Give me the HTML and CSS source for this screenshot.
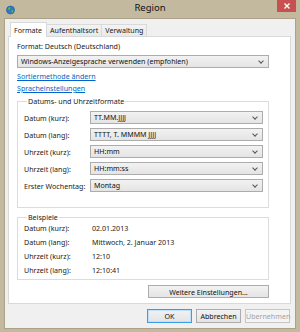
FILE: index.html
```html
<!DOCTYPE html>
<html>
<head>
    <meta charset="utf-8">
    <title>Region</title>
    <link rel="stylesheet" href="styles.css">
</head>
<body>
    <div class="window">
        <div class="titlebar">
            <div class="tb-left">
                <svg class="app-icon" width="9" height="10" viewBox="0 0 9 10">
                    <circle cx="4.5" cy="5" r="4" fill="#2b78c8"/>
                    <path d="M2 3 Q3 2 4.5 2.4 L4 4.5 L2.6 5.2 Z M5.4 5.5 L7.6 5 L7 7.4 L5.6 8 Z" fill="#5cb848"/>
                    <circle cx="4.5" cy="5" r="4" fill="none" stroke="#1d5a9c" stroke-width="0.6"/>
                </svg>
            </div>
            <div class="title">Region</div>
            <div class="tb-right">
                <div class="close">
                    <svg width="6" height="6" viewBox="0 0 6 6"><path d="M0.5 0.5 L5.5 5.5 M5.5 0.5 L0.5 5.5" stroke="#fff" stroke-width="1.4"/></svg>
                </div>
            </div>
        </div>

        <div class="client">
            <div class="tabs">
                <div class="tab active">Formate</div>
                <div class="tab">Aufenthaltsort</div>
                <div class="tab">Verwaltung</div>
            </div>

            <div class="panel">
                <div class="format-label">Format: Deutsch (Deutschland)</div>
                <div class="combo"><span>Windows-Anzeigesprache verwenden (empfohlen)</span><i class="chev"></i></div>
                <a class="link" href="#">Sortiermethode ändern</a>
                <a class="link" href="#">Spracheinstellungen</a>

                <fieldset class="group formats">
                    <legend>Datums- und Uhrzeitformate</legend>
                    <div class="form-grid">
                        <label>Datum (kurz):</label>
                        <div class="combo"><span>TT.MM.JJJJ</span><i class="chev"></i></div>
                        <label>Datum (lang):</label>
                        <div class="combo"><span>TTTT, T. MMMM JJJJ</span><i class="chev"></i></div>
                        <label>Uhrzeit (kurz):</label>
                        <div class="combo"><span>HH:mm</span><i class="chev"></i></div>
                        <label>Uhrzeit (lang):</label>
                        <div class="combo"><span>HH:mm:ss</span><i class="chev"></i></div>
                        <label>Erster Wochentag:</label>
                        <div class="combo"><span>Montag</span><i class="chev"></i></div>
                    </div>
                </fieldset>

                <fieldset class="group examples">
                    <legend>Beispiele</legend>
                    <div class="example-grid">
                        <span>Datum (kurz):</span><span>02.01.2013</span>
                        <span>Datum (lang):</span><span>Mittwoch, 2. Januar 2013</span>
                        <span>Uhrzeit (kurz):</span><span>12:10</span>
                        <span>Uhrzeit (lang):</span><span>12:10:41</span>
                    </div>
                </fieldset>

                <div class="more-row">
                    <button class="btn more">Weitere Einstellungen...</button>
                </div>
            </div>

            <div class="actions">
                <button class="btn default">OK</button>
                <button class="btn">Abbrechen</button>
                <button class="btn" disabled>Übernehmen</button>
            </div>
        </div>
    </div>
</body>
</html>
```

FILE: styles.css
```css
html, body {
 margin: 0;
 padding: 0; }
body {
 width: 300px;
 height: 332px;
 overflow: hidden;
 font-family: "Noto Sans", "Open Sans", "DejaVu Sans", sans-serif;
 font-size: 7.1px;
 color: #1a1a1a; }

.window {
 width: 300px;
 height: 332px;
 background: #c3b99f;
 display: flex;
 flex-direction: column; }

/* title bar */
.titlebar {
 height: 19px;
 display: grid;
 grid-template-columns: 1fr auto 1fr; }
.titlebar .tb-left {
 display: flex;
 align-items: center;
 padding-left: 6px; }
.titlebar .title {
 font-size: 9.5px;
 line-height: 15px;
 color: #111; }
.titlebar .tb-right {
 display: flex;
 justify-content: flex-end;
 padding-right: 4px; }
.titlebar .close {
 width: 19px;
 height: 12px;
 background: #c75050;
 display: flex;
 align-items: center;
 justify-content: center; }
.titlebar .close svg {
 display: block; }

/* client area */
.client {
 flex: 1;
 margin: 0 5px 4px;
 background: #f0f0f0;
 box-shadow: 0 0 0 1px #aca288;
 display: flex;
 flex-direction: column;
 padding: 3px 0 5px; }

.tabs {
 display: flex;
 align-items: flex-end;
 height: 14px;
 margin-left: 5px;
 position: relative;
 z-index: 1; }
.tabs .tab {
 height: 11px;
 line-height: 11px;
 padding: 0 3px;
 border: 1px solid #d9d9d9;
 border-bottom: none;
 background: linear-gradient(#f3f3f3, #e9e9e9);
 color: #1a1a1a;
 margin-left: -1px; }
.tabs .tab.active {
 height: 14px;
 line-height: 14px;
 background: #fff;
 margin-left: 0;
 margin-bottom: -1px;
 padding: 0 4px 0 3px; }

.panel {
 margin: 0 4px 0 3px;
 background: #fff;
 border: 1px solid #d9d9d9;
 padding: 4px 21px 5px 8px; }

.format-label {
 line-height: 10px; }

.combo {
 height: 11px;
 border: 1px solid #acacac;
 background: linear-gradient(#f2f2f2, #e4e4e4);
 display: flex;
 align-items: center;
 justify-content: space-between;
 padding: 0 5px 0 3px;
 line-height: 11px;
 color: #111; }
.panel > .combo {
 margin-top: 4px; }
.combo .chev {
 width: 3px;
 height: 3px;
 border-right: 1px solid #555;
 border-bottom: 1px solid #555;
 transform: rotate(45deg);
 margin-top: -2px; }

.link {
 display: block;
 width: fit-content;
 line-height: 10px;
 color: #0066cc;
 text-decoration: underline;
 margin-top: 2px; }
.panel > .combo + .link {
 margin-top: 3px; }

.group {
 margin: 3px 0 0;
 border: 1px solid #dcdcdc;
 padding: 5px 5px 15px 6px;
 min-width: 0; }
.group legend {
 line-height: 10px;
 padding: 0 1px;
 margin-left: 3px; }
.group.examples {
 margin-top: 4px;
 padding: 0 5px 2px 6px; }

.form-grid {
 display: grid;
 grid-template-columns: 66px 1fr;
 row-gap: 4px;
 align-items: center; }

.example-grid {
 display: grid;
 grid-template-columns: 68px 1fr;
 row-gap: 1px;
 line-height: 13px; }

.btn {
 font-family: inherit;
 font-size: 7.1px;
 height: 13px;
 padding: 0;
 border: 1px solid #acacac;
 background: linear-gradient(#f2f2f2, #e4e4e4);
 color: #111; }
.btn:disabled {
 color: #a3a3a3;
 border-color: #c7c7c7;
 background: #f4f4f4; }
.btn.default {
 border-color: #3c9ce8;
 box-shadow: inset 0 0 0 1px #bfe0fa; }

.more-row {
 display: flex;
 justify-content: flex-end;
 margin-top: 5px; }
.btn.more {
 width: 121px; }

.actions {
 display: flex;
 justify-content: flex-end;
 gap: 4px;
 margin-top: 5px;
 padding-right: 5px; }
.actions .btn {
 width: 45px;
 height: 14px; }
```
